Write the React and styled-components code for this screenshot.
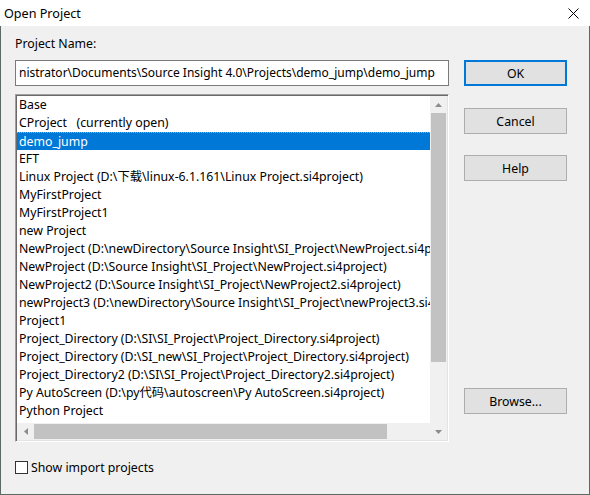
import React from 'react'
import styled, { createGlobalStyle } from 'styled-components'

const GlobalStyle = createGlobalStyle`
  html, body {
    margin: 0;
    padding: 0;
    background: #fff;
  }
  body {
    font-family: 'Noto Sans', 'Noto Sans CJK SC', sans-serif;
    font-size: 12.3px;
    color: #000;
  }
`

const Window = styled.div`
  width: 590px;
  height: 495px;
  display: flex;
  flex-direction: column;
  box-sizing: border-box;
`

const TitleBar = styled.div`
  height: 26px;
  flex: none;
  background: #fff;
  display: flex;
  align-items: center;
  justify-content: space-between;
  padding: 0 11px 0 4px;
  font-size: 12.6px;
`

const Body = styled.div`
  flex: 1;
  background: #f0f0f0;
  border: 1px solid #5b6a66;
  border-top: none;
  padding: 0 21px 0 14px;
  display: grid;
  grid-template-columns: 434px 103px;
  column-gap: 15px;
  align-items: start;
`

const LeftColumn = styled.div`
  display: flex;
  flex-direction: column;
  padding-top: 10px;
`

const Label = styled.div`
  height: 16px;
  line-height: 16px;
`

const TextBox = styled.div`
  margin-top: 8px;
  height: 26px;
  box-sizing: border-box;
  border: 1px solid #7a7a7a;
  background: #fff;
  padding-left: 3px;
  font-size: 12px;
  line-height: 24px;
  white-space: nowrap;
  overflow: hidden;
`

const ListBox = styled.div`
  margin-top: 8px;
  height: 348px;
  box-sizing: border-box;
  border-top: 1px solid #a0a0a0;
  border-left: 1px solid #a0a0a0;
  border-right: 1px solid #fff;
  border-bottom: 1px solid #fff;
  box-shadow: inset 1px 1px 0 #696969, inset -1px -1px 0 #e3e3e3;
  padding: 1px;
  display: grid;
  grid-template-columns: 1fr 17px;
  grid-template-rows: 1fr 17px;
  background: #fff;
`

const Items = styled.div`
  overflow: hidden;
  grid-column: 1;
  grid-row: 1;
`

const Item = styled.div`
  height: 18px;
  padding-left: 2px;
  box-sizing: border-box;
  white-space: pre;
  background: ${(p) => (p.$selected ? '#0078d7' : 'transparent')};
  color: ${(p) => (p.$selected ? '#fff' : '#000')};
  border-top: ${(p) => (p.$selected ? '1px dotted #e8a050' : 'none')};
  line-height: ${(p) => (p.$selected ? '17px' : '18px')};
`

const VScroll = styled.div`
  grid-column: 2;
  grid-row: 1 / span 2;
  background: #f0f0f0;
  display: flex;
  flex-direction: column;
`

const HScroll = styled.div`
  grid-column: 1;
  grid-row: 2;
  background: #f0f0f0;
  display: flex;
`

const ArrowBox = styled.div`
  width: 17px;
  height: 17px;
  flex: none;
  display: flex;
  align-items: center;
  justify-content: center;
`

const VThumb = styled.div`
  height: 249px;
  background: #c2c2c2;
  margin: 0 1px;
`

const Track = styled.div`
  flex: 1;
`

const HThumb = styled.div`
  width: 353px;
  background: #c2c2c2;
  margin: 1px 0;
`

const CheckRow = styled.label`
  margin-top: 17px;
  height: 17px;
  display: flex;
  align-items: center;
  gap: 3px;
`

const CheckBox = styled.span`
  width: 13px;
  height: 13px;
  box-sizing: border-box;
  border: 1px solid #333;
  background: #fff;
  display: inline-block;
`

const RightColumn = styled.div`
  display: flex;
  flex-direction: column;
  padding-top: 34px;
`

const Button = styled.div`
  height: 26px;
  box-sizing: border-box;
  margin-top: ${(p) => p.$gap || 0}px;
  background: #e1e1e1;
  border: ${(p) => (p.$default ? '2px solid #0078d7' : '1px solid #adadad')};
  display: flex;
  align-items: center;
  justify-content: center;
`

const Tri = ({ dir }) => {
  const pts = {
    up: '0,4 3.5,0 7,4',
    down: '0,0 3.5,4 7,0',
  }
  if (dir === 'left') {
    return (
      <svg width="4" height="7" viewBox="0 0 4 7">
        <polygon points="4,0 0,3.5 4,7" fill="#8c8c8c" />
      </svg>
    )
  }
  return (
    <svg width="7" height="4" viewBox="0 0 7 4">
      <polygon points={pts[dir]} fill="#8c8c8c" />
    </svg>
  )
}

const projects = [
  'Base',
  'CProject   (currently open)',
  'demo_jump',
  'EFT',
  'Linux Project (D:\\下载\\linux-6.1.161\\Linux Project.si4project)',
  'MyFirstProject',
  'MyFirstProject1',
  'new Project',
  'NewProject (D:\\newDirectory\\Source Insight\\SI_Project\\NewProject.si4project)',
  'NewProject (D:\\Source Insight\\SI_Project\\NewProject.si4project)',
  'NewProject2 (D:\\Source Insight\\SI_Project\\NewProject2.si4project)',
  'newProject3 (D:\\newDirectory\\Source Insight\\SI_Project\\newProject3.si4project)',
  'Project1',
  'Project_Directory (D:\\SI\\SI_Project\\Project_Directory.si4project)',
  'Project_Directory (D:\\SI_new\\SI_Project\\Project_Directory.si4project)',
  'Project_Directory2 (D:\\SI\\SI_Project\\Project_Directory2.si4project)',
  'Py AutoScreen (D:\\py代码\\autoscreen\\Py AutoScreen.si4project)',
  'Python Project',
  'sample_lib',
]

export default function App() {
  return (
    <>
      <GlobalStyle />
      <Window>
        <TitleBar>
          <span>Open Project</span>
          <svg width="11" height="11" viewBox="0 0 11 11">
            <path d="M0.5 0.5 L10.5 10.5 M10.5 0.5 L0.5 10.5" stroke="#000" strokeWidth="1" />
          </svg>
        </TitleBar>
        <Body>
          <LeftColumn>
            <Label>Project Name:</Label>
            <TextBox>nistrator\Documents\Source Insight 4.0\Projects\demo_jump\demo_jump</TextBox>
            <ListBox>
              <Items>
                {projects.map((name) => (
                  <Item key={name} $selected={name === 'demo_jump'}>
                    {name}
                  </Item>
                ))}
              </Items>
              <VScroll>
                <ArrowBox><Tri dir="up" /></ArrowBox>
                <VThumb />
                <Track />
                <ArrowBox><Tri dir="down" /></ArrowBox>
              </VScroll>
              <HScroll>
                <ArrowBox><Tri dir="left" /></ArrowBox>
                <HThumb />
                <Track />
              </HScroll>
            </ListBox>
            <CheckRow>
              <CheckBox />
              <span>Show import projects</span>
            </CheckRow>
          </LeftColumn>
          <RightColumn>
            <Button $default>OK</Button>
            <Button $gap={22}>Cancel</Button>
            <Button $gap={21}>Help</Button>
            <Button $gap={207}>Browse...</Button>
          </RightColumn>
        </Body>
      </Window>
    </>
  )
}
